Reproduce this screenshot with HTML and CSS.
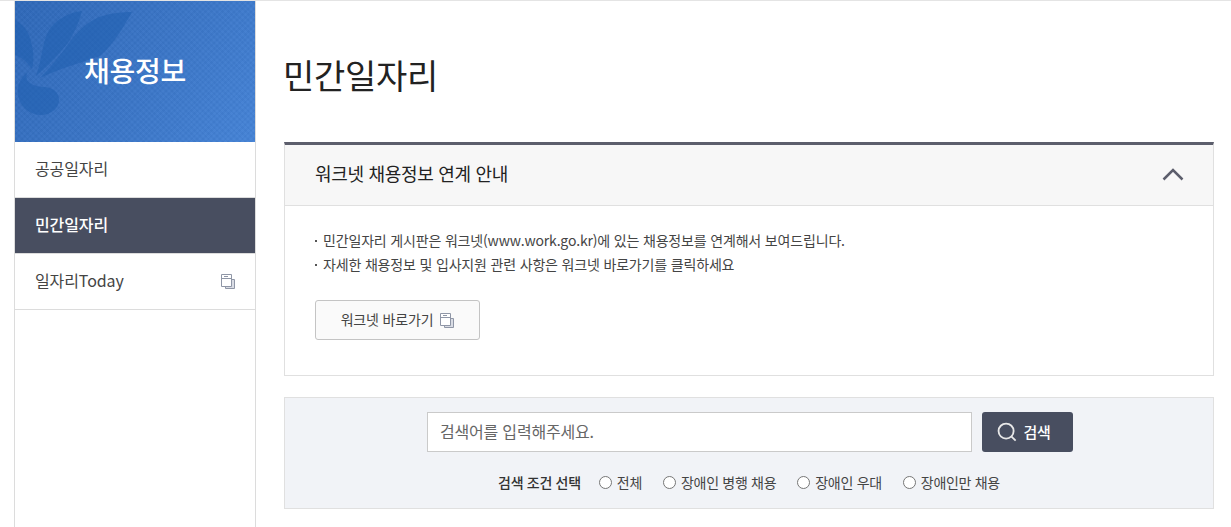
FILE: index.html
```html
<!DOCTYPE html>
<html lang="ko">
<head>
<meta charset="utf-8">
<title>민간일자리</title>
<link rel="stylesheet" href="styles.css">
</head>
<body>
<div class="layout">
  <aside class="side">
    <div class="banner">
      <svg class="banner-art" viewBox="15 1 240 141" aria-hidden="true">
        <path class="art" d="M15 20C24 25 29 32 31 42C34 52 34 62 32 69C28 64 24 58 15 55Z"/>
        <path class="art" d="M82 11C70 12 54 20 48 32C42 44 42 60 36 76C48 66 66 48 72 36C77 27 80 18 82 11Z"/>
        <path class="art" d="M132 12C120 12 106 14 97 18C82 25 72 38 64 50C56 60 48 70 40 78C60 68 84 62 100 56C114 44 124 26 132 12Z"/>
        <path class="art" d="M28 72C20 78 17 86 18 95C20 107 30 115 41 115C51 115 59 108 59 100C59 92 52 87 44 87C36 87 30 84 27 80C26 77 26 74 28 72Z"/>
      </svg>
      <h2 class="banner-title">채용정보</h2>
    </div>
    <nav class="menu">
      <a class="menu-item">공공일자리</a>
      <a class="menu-item active">민간일자리</a>
      <a class="menu-item">일자리Today
        <svg class="win-icon" viewBox="0 0 14 15" aria-hidden="true"><path class="win-back" d="M4.500 5.500h9v9h-9z"/><path class="win-front" d="M.5.5h10v12h-10zM.5 4.500h10M3 2.500h4"/></svg>
      </a>
    </nav>
  </aside>
  <main class="main">
    <h1 class="title">민간일자리</h1>
    <section class="notice">
      <header class="notice-head">
        <h3 class="notice-title">워크넷 채용정보 연계 안내</h3>
        <svg class="chev" viewBox="0 0 22 14" aria-hidden="true"><path d="M1.500 12.500 11 3l9.500 9.500"/></svg>
      </header>
      <div class="notice-body">
        <ul class="notes">
          <li>민간일자리 게시판은 워크넷(www.work.go.kr)에 있는 채용정보를 연계해서 보여드립니다.</li>
          <li>자세한 채용정보 및 입사지원 관련 사항은 워크넷 바로가기를 클릭하세요</li>
        </ul>
        <a class="go-btn">워크넷 바로가기
          <svg class="win-icon" viewBox="0 0 14 15" aria-hidden="true"><path class="win-back" d="M4.500 5.500h9v9h-9z"/><path class="win-front" d="M.5.5h10v12h-10zM.5 4.500h10M3 2.500h4"/></svg>
        </a>
      </div>
    </section>
    <section class="search">
      <div class="search-row">
        <input class="search-input" type="text" placeholder="검색어를 입력해주세요.">
        <button class="search-btn" type="button">
          <svg class="search-ico" viewBox="0 0 22 22" aria-hidden="true"><circle cx="10" cy="10" r="8.300"/><path d="m16 16 4.500 4.500"/></svg>
          검색
        </button>
      </div>
      <div class="filters">
        <strong class="filter-label">검색 조건 선택</strong>
        <label class="radio"><i class="dot"></i>전체</label>
        <label class="radio"><i class="dot"></i>장애인 병행 채용</label>
        <label class="radio"><i class="dot"></i>장애인 우대</label>
        <label class="radio"><i class="dot"></i>장애인만 채용</label>
      </div>
    </section>
  </main>
</div>
</body>
</html>
```
FILE: styles.css
```css
* { box-sizing: border-box; }
html, body { margin: 0; height: 100%; }
body {
  background: #fff;
  color: #333;
  font-family: "Noto Sans CJK KR", "Noto Sans", sans-serif;
  overflow: hidden;
}
.layout {
  display: flex;
  height: 527px;
  border-top: 1px solid #e4e4e4;
  padding-left: 14px;
}
.side {
  width: 242px;
  flex: none;
  border-left: 1px solid #dcdcdc;
  border-right: 1px solid #dcdcdc;
}
.banner {
  position: relative;
  height: 141px;
  display: flex;
  align-items: center;
  justify-content: center;
  padding-bottom: 4px;
  background:
    repeating-linear-gradient(45deg, rgba(255,255,255,.015) 0 2px, rgba(0,0,0,.015) 2px 4px),
    repeating-linear-gradient(-45deg, rgba(255,255,255,.015) 0 2px, rgba(0,0,0,.015) 2px 4px),
    linear-gradient(125deg, #2f69b9 0%, #3a75c6 50%, #4583d6 100%);
}
.banner-art { position: absolute; left: 0; top: 0; width: 240px; height: 141px; }
.art { fill: #1f5fae; fill-opacity: .55; }
.banner-title {
  position: relative;
  margin: 0;
  color: #fff;
  font-size: 28px;
  font-weight: 500;
  letter-spacing: -.2px;
}
.menu-item {
  display: flex;
  align-items: center;
  justify-content: space-between;
  height: 56px;
  padding: 0 20px 3px 20px;
  border-bottom: 1px solid #dcdcdc;
  font-size: 16px;
  letter-spacing: -.1px;
  color: #444;
}
.menu-item.active { background: #484e60; color: #fff; font-weight: 500; }
.menu-item .win-icon { position: relative; top: 1px; }
.win-icon { width: 14px; height: 15px; fill: none; }
.win-back { fill: #d9dce4; stroke: #8f96a6; }
.win-front { fill: #fff; stroke: #8f96a6; }
.main { width: 930px; margin-left: 28px; }
.title {
  margin: 0;
  height: 141px;
  padding-top: 48px;
  font-size: 34px;
  line-height: 52px;
  font-weight: 400;
  letter-spacing: -.3px;
  color: #222;
  text-indent: -1px;
}
.notice {
  height: 234px;
  border: 1px solid #e0e0e0;
  border-top: 3px solid #5c5e6c;
}
.notice-head {
  display: flex;
  align-items: center;
  justify-content: space-between;
  height: 61px;
  padding: 0 29px 4px 30px;
  background: #f7f7f7;
  border-bottom: 1px solid #e0e0e0;
}
.notice-title { margin: 0; font-size: 18px; font-weight: 400; letter-spacing: -.3px; color: #222; }
.chev { width: 22px; height: 14px; fill: none; stroke: #5c5e6c; stroke-width: 2.500; position: relative; top: 1px; }
.notice-body { padding: 22px 30px 0; }
.notes {
  margin: 0;
  padding: 0;
  list-style: none;
  font-size: 14px;
  line-height: 24px;
  letter-spacing: -.17px;
  color: #444;
}
.notes li { padding-left: 8px; position: relative; }
.notes li::before {
  content: "";
  position: absolute;
  left: 0;
  top: 12px;
  width: 2px;
  height: 2px;
  background: #555;
}
.go-btn {
  display: inline-flex;
  align-items: center;
  justify-content: center;
  gap: 7px;
  width: 165px;
  height: 40px;
  margin-top: 24px;
  padding-bottom: 2px;
  background: #fafafa;
  border: 1px solid #c4c4c4;
  border-radius: 3px;
  font-size: 14px;
  letter-spacing: -.17px;
  color: #444;
}
.go-btn .win-icon { position: relative; top: 1px; }
.search {
  height: 112px;
  margin-top: 21px;
  padding-top: 14px;
  background: #f1f3f7;
  border: 1px solid #e0e0e0;
}
.search-row {
  display: flex;
  justify-content: center;
  gap: 10px;
  padding-left: 2px;
}
.search-input {
  width: 545px;
  height: 40px;
  padding: 0 12px 2px;
  border: 1px solid #cacaca;
  background: #fff;
  font: 16px "Noto Sans CJK KR", sans-serif;
  letter-spacing: -.2px;
}
.search-input::placeholder { color: #666; opacity: 1; }
.search-btn {
  display: flex;
  align-items: center;
  justify-content: center;
  gap: 6px;
  width: 91px;
  height: 40px;
  padding: 0 7px 2px 0;
  border: 0;
  border-radius: 3px;
  background: #484e60;
  color: #fff;
  font: 500 15px "Noto Sans CJK KR", sans-serif;
  letter-spacing: -.3px;
}
.search-ico { width: 20px; height: 20px; fill: none; stroke: #e8e8e8; stroke-width: 2; position: relative; top: 1px; }
.filters {
  display: flex;
  justify-content: center;
  align-items: center;
  gap: 21px;
  margin-top: 20px;
  font-size: 14px;
  line-height: 20px;
  letter-spacing: -.3px;
  color: #444;
}
.filter-label { font-weight: 500; color: #333; margin-right: -3px; }
.radio { display: flex; align-items: center; gap: 5px; }
.dot {
  width: 13px;
  height: 13px;
  border: 1px solid #767676;
  border-radius: 50%;
  background: #fff;
}
```
